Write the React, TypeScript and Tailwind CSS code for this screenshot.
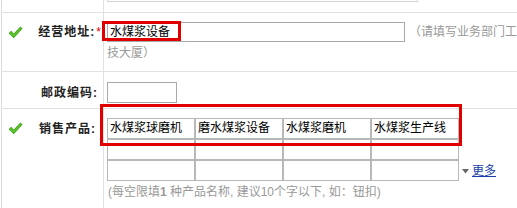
import React from "react";

function Check() {
  return (
    <svg width="15" height="13" viewBox="0 0 15 13" className="shrink-0">
      <path d="M0.5 7.2 L3.2 4.8 L5.8 7.6 L12.4 0.6 L14.6 2.6 L5.8 12.2 Z" fill="#45a81f" />
      <path d="M1.6 7.2 L3.2 5.9 L5.8 8.7 L12.4 1.8 L13.4 2.6 L5.8 10.9 Z" fill="#5cc52e" />
    </svg>
  );
}

const cellInput = "h-[21px] w-[88px] border border-[#b8b8b8] px-[2px] text-[12px] leading-[19px] text-black whitespace-nowrap";

const products = [
  ["水煤浆球磨机", "磨水煤浆设备", "水煤浆磨机", "水煤浆生产线"],
  ["", "", "", ""],
  ["", "", "", ""],
];

export default function App() {
  return (
    <div className="relative h-[208px] w-[517px] overflow-hidden bg-white font-['Liberation_Sans','Noto_Sans_CJK_SC',sans-serif] text-[12px] leading-[14px]">
      <div className="ml-px border-l border-[#dcdcdc]">
        {/* previous row tail */}
        <div className="flex h-[13px] border-b border-[#e1e1e1]">
          <div className="w-[102px] shrink-0 border-r border-[#e1e1e1]" />
          <div className="min-w-0 flex-1 pl-[3px]">
            <div className="h-[2px] w-[311px] border-x border-b border-[#d4d4d4]" />
          </div>
        </div>

        {/* 经营地址 */}
        <div className="flex h-[59px] border-b border-[#e1e1e1]">
          <div className="flex w-[102px] shrink-0 items-start border-r border-[#e1e1e1] pl-[6px] pt-[9px]">
            <div className="flex h-[20px] w-full items-center whitespace-nowrap">
              <Check />
              <span className="ml-auto font-bold tracking-[1px] text-[#222]">经营地址:</span>
              <span className="ml-[1px] mr-[2px] text-[#d00]">*</span>
            </div>
          </div>
          <div className="min-w-0 flex-1 pl-[3px] pt-[9px]">
            <div className="flex items-center whitespace-nowrap">
              <div className="h-[20px] w-[298px] shrink-0 border border-[#a9a9a9] px-[2px] leading-[18px] text-black">
                水煤浆设备
              </div>
              <span className="ml-[4px] text-[#999]">（请填写业务部门工</span>
            </div>
            <div className="mt-[4px] text-[#999]">技大厦）</div>
          </div>
        </div>

        {/* 邮政编码 */}
        <div className="flex h-[37px] border-b border-[#e1e1e1]">
          <div className="flex w-[102px] shrink-0 items-start border-r border-[#e1e1e1] pr-[5px] pt-[10px]">
            <div className="flex h-[21px] w-full items-center justify-end whitespace-nowrap">
              <span className="font-bold tracking-[1px] text-[#222]">邮政编码:</span>
            </div>
          </div>
          <div className="min-w-0 flex-1 pl-[3px] pt-[10px]">
            <div className="h-[21px] w-[70px] border border-[#a9a9a9]" />
          </div>
        </div>

        {/* 销售产品 */}
        <div className="flex h-[100px]">
          <div className="flex w-[102px] shrink-0 items-start border-r border-[#e1e1e1] pl-[6px] pr-[7px] pt-[9px]">
            <div className="flex h-[21px] w-full items-center whitespace-nowrap">
              <Check />
              <span className="ml-auto font-bold tracking-[1px] text-[#222]">销售产品:</span>
            </div>
          </div>
          <div className="min-w-0 flex-1 pl-[3px] pt-[9px]">
            <div className="flex items-end">
              <div className="flex shrink-0 flex-col">
                {products.map((row, i) => (
                  <div key={i} className="flex">
                    {row.map((p, j) => (
                      <div key={j} className={cellInput}>
                        {p}
                      </div>
                    ))}
                  </div>
                ))}
              </div>
              <div className="mb-[3px] ml-[3px] flex items-center whitespace-nowrap">
                <svg width="7" height="5" viewBox="0 0 7 5" className="mr-[3px]">
                  <path d="M0 0 H7 L3.5 4.5 Z" fill="#666" />
                </svg>
                <a href="#" className="text-[#1b3fa8] underline">
                  更多
                </a>
              </div>
            </div>
            <div className="mt-[4px] whitespace-nowrap pl-[1px] text-[#999]">
              (每空限填<b className="font-bold">1</b> 种产品名称, 建议10个字以下, 如：钮扣)
            </div>
          </div>
        </div>
      </div>

      {/* red annotation boxes */}
      <div className="pointer-events-none absolute left-[102px] top-[21px] h-[20px] w-[79px] border-[3px] border-[#e00000]" />
      <div className="pointer-events-none absolute left-[100px] top-[104px] h-[42px] w-[362px] border-[3px] border-[#e00000]" />
    </div>
  );
}
